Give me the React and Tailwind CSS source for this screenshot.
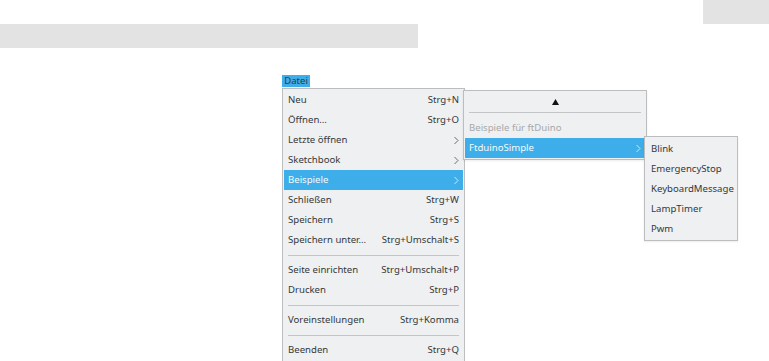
import React from 'react';

const mainItems = [
    { label: 'Neu', shortcut: 'Strg+N' },
    { label: 'Öffnen…', shortcut: 'Strg+O' },
    { label: 'Letzte öffnen', sub: true },
    { label: 'Sketchbook', sub: true },
    { label: 'Beispiele', sub: true, active: true },
    { label: 'Schließen', shortcut: 'Strg+W' },
    { label: 'Speichern', shortcut: 'Strg+S' },
    { label: 'Speichern unter…', shortcut: 'Strg+Umschalt+S' },
    { sep: true },
    { label: 'Seite einrichten', shortcut: 'Strg+Umschalt+P' },
    { label: 'Drucken', shortcut: 'Strg+P' },
    { sep: true },
    { label: 'Voreinstellungen', shortcut: 'Strg+Komma' },
    { sep: true },
    { label: 'Beenden', shortcut: 'Strg+Q' },
];

const examples = ['Blink', 'EmergencyStop', 'KeyboardMessage', 'LampTimer', 'Pwm'];

// thin ">" used for submenu entries
const Chevron = ({ light }) => (
    <svg width="6" height="9" viewBox="0 0 6 9" className="shrink-0">
        <path d="M1.5 1 L5 4.5 L1.5 8" fill="none" stroke={light ? '#d6eefa' : '#5a5c5e'} strokeWidth="0.9" />
    </svg>
);

const Separator = ({ className }) => (
    <div className={`h-[10px] flex items-center ${className}`}>
        <div className="h-px w-full bg-[#c3c5c7]" />
    </div>
);

const MenuRow = ({ item }) => (
    <div
        className={`h-5 flex items-center justify-between pl-1 pr-[4px] ${
            item.active ? 'bg-[#3daee9] text-[#f4fafd]' : 'text-[#35383a]'
        }`}
    >
        <span>{item.label}</span>
        {item.sub ? <Chevron light={item.active} /> : <span>{item.shortcut}</span>}
    </div>
);

const App = () => {
    return (
        <div className="relative w-[769px] h-[361px] overflow-hidden bg-white font-['Noto_Sans',sans-serif] text-[9.6px] leading-none">
            {/* window chrome strips */}
            <div className="flex justify-end">
                <div className="w-[66px] h-6 bg-[#e3e3e3]" />
            </div>
            <div className="w-[418px] h-6 bg-[#e3e3e3]" />

            {/* menubar entry */}
            <div className="absolute left-[282px] top-[75px] w-[28px] h-[12px] bg-[#3daee9] text-[#35383a] flex items-center justify-center">
                Datei
            </div>

            {/* Datei menu */}
            <div className="absolute left-[282px] top-[88px] w-[183px] h-[280px] bg-[#eff0f1] border border-[#bbbdbf] p-px">
                {mainItems.map((item, i) =>
                    item.sep ? (
                        <Separator key={i} className="px-1" />
                    ) : (
                        <MenuRow key={i} item={item} />
                    )
                )}
            </div>

            {/* Beispiele submenu */}
            <div className="absolute left-[463px] top-[90px] w-[184px] bg-[#eff0f1] border border-[#bbbdbf] p-px shadow-[0_1px_2px_rgba(0,0,0,0.08)]">
                <div className="h-5 flex items-center justify-center">
                    <svg width="7" height="6" viewBox="0 0 7 6">
                        <path d="M3.5 0 L7 6 L0 6 Z" fill="#111" />
                    </svg>
                </div>
                <div className="px-[4px]">
                    <div className="h-px bg-[#c3c5c7]" />
                </div>
                <div className="h-[5px]" />
                <div className="h-5 flex items-center pl-1 text-[#a6a8aa]">Beispiele für ftDuino</div>
                <div className="h-5 flex items-center justify-between pl-1 pr-[4px] bg-[#3daee9] text-[#f4fafd]">
                    <span>FtduinoSimple</span>
                    <Chevron light />
                </div>
            </div>

            {/* FtduinoSimple submenu */}
            <div className="absolute left-[644px] top-[136px] w-[94px] bg-[#eff0f1] border border-[#bbbdbf] pt-[2px] pb-px px-px shadow-[0_1px_2px_rgba(0,0,0,0.08)]">
                {examples.map((name) => (
                    <div key={name} className="h-5 flex items-center pl-[5px] text-[#35383a]">
                        {name}
                    </div>
                ))}
            </div>
        </div>
    );
};

export default App;
